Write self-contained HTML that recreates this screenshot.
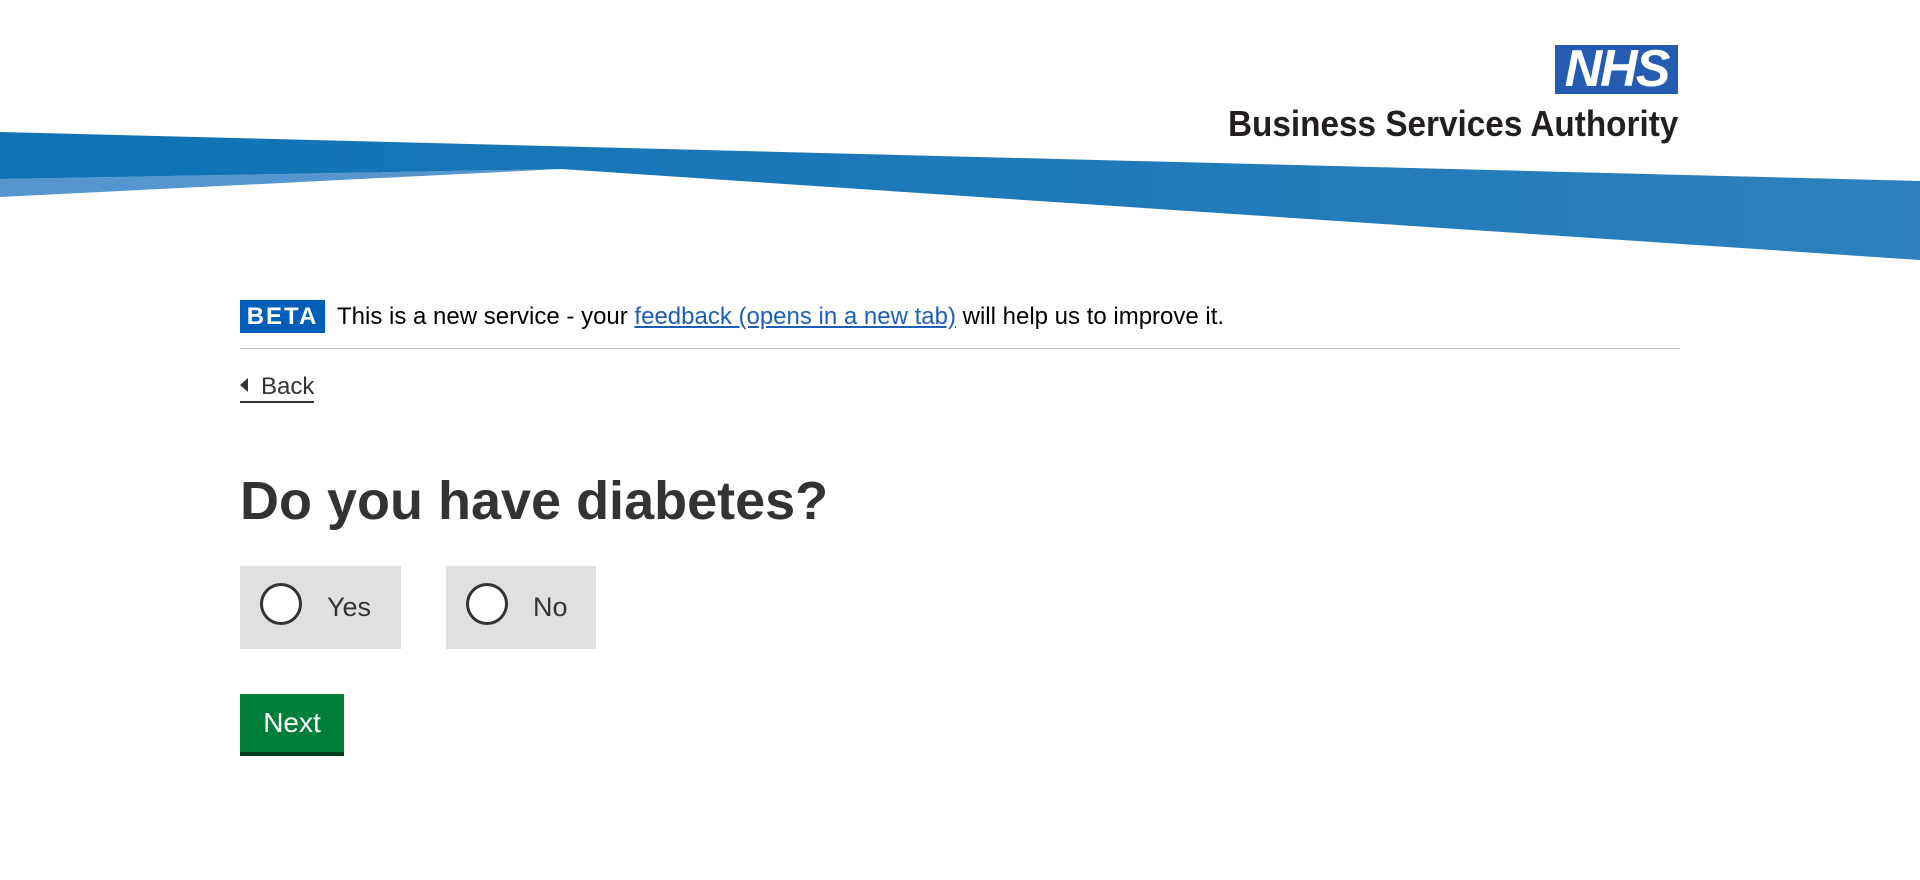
<!DOCTYPE html>
<html><head><meta charset="utf-8"><style>
*{margin:0;padding:0;box-sizing:border-box}
body{width:1920px;height:880px;background:#fff;position:relative;overflow:hidden;font-family:"Liberation Sans",Arial,sans-serif;color:#212b32}
.abs{position:absolute}
</style></head><body>
<svg class="abs" style="left:0;top:0" width="1920" height="280">
<defs><linearGradient id="g" x1="0" x2="1"><stop offset="0" stop-color="#0e72b5"/><stop offset="1" stop-color="#2d80bd"/></linearGradient></defs>
<polygon points="0,179 561,169 0,197" fill="#5596d0"/>
<polygon points="0,132 1920,181 1920,260 561,169 0,179" fill="url(#g)"/>
</svg>
<div class="abs" style="left:1555px;top:45px;width:123px;height:49px;background:#235cb0;color:#fff;font:italic bold 52px/49px 'Liberation Sans',sans-serif;text-align:center;letter-spacing:-2px">NHS</div>
<div class="abs" style="left:1228px;top:103px;width:450px;font:bold 36px/42px 'Liberation Sans',sans-serif;color:#231f20;white-space:nowrap;transform-origin:left top;transform:scaleX(0.925)">Business Services Authority</div>
<div class="abs" style="left:240px;top:300px;width:85px;height:33px;background:#005eb8;color:#fff;font:bold 24px/33px 'Liberation Sans',sans-serif;text-align:center;letter-spacing:2px">BETA</div>
<div class="abs" style="left:337px;top:302px;font-size:24px;line-height:30px;color:#000;white-space:nowrap">This is a new service - your <span style="text-decoration:underline;color:#1d5fb4">feedback (opens in a new tab)</span> will help us to improve it.</div>
<div class="abs" style="left:240px;top:348px;width:1440px;height:1px;background:#c4c4c4"></div>
<div class="abs" style="left:240px;top:378px;width:0;height:0;border-top:7px solid transparent;border-bottom:7px solid transparent;border-right:8px solid #333"></div>
<div class="abs" style="left:261px;top:372px;font-size:24px;line-height:30px;color:#333">Back</div>
<div class="abs" style="left:240px;top:401px;width:74px;height:2px;background:#333"></div>
<div class="abs" style="left:240px;top:468px;font:bold 54px/66px 'Liberation Sans',sans-serif;color:#333;white-space:nowrap">Do you have diabetes?</div>
<div class="abs" style="left:240px;top:566px;width:161px;height:83px;background:#dfe0e2"></div>
<div class="abs" style="left:446px;top:566px;width:150px;height:83px;background:#dfe0e2"></div>
<div class="abs" style="left:260px;top:583px;width:42px;height:42px;border:3px solid #333;border-radius:50%;background:#fff"></div>
<div class="abs" style="left:466px;top:583px;width:42px;height:42px;border:3px solid #333;border-radius:50%;background:#fff"></div>
<div class="abs" style="left:327px;top:590px;font-size:27px;line-height:34px;color:#333">Yes</div>
<div class="abs" style="left:533px;top:590px;font-size:27px;line-height:34px;color:#333">No</div>
<div class="abs" style="left:240px;top:694px;width:104px;height:62px;background:#007f3b;border-bottom:4px solid #00401e"></div>
<div class="abs" style="left:240px;top:706px;width:104px;text-align:center;font-size:28px;line-height:34px;color:#fff">Next</div>
</body></html>
